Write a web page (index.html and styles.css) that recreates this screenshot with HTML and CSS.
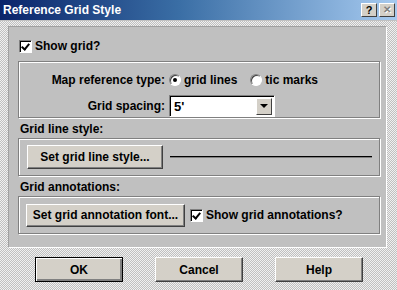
FILE: index.html
```html
<!DOCTYPE html>
<html lang="en">
<head>
  <meta charset="UTF-8" />
  <title>Reference Grid Style</title>
  <link rel="stylesheet" href="styles.css">
</head>
<body>
  <div class="window">
    <div class="titlebar">
      <span class="title">Reference Grid Style</span>
      <div class="caption-buttons">
        <span class="cap-btn">?</span>
        <span class="cap-btn disabled">&#x2715;</span>
      </div>
    </div>

    <div class="frame">
      <div class="panel">
        <label class="check show-grid">
          <span class="box checked"></span>
          <span>Show grid?</span>
        </label>

        <div class="group ref-group">
          <div class="field-row">
            <span class="field-label">Map reference type:</span>
            <label class="radio"><span class="dot on"></span>grid lines</label>
            <label class="radio"><span class="dot"></span>tic marks</label>
          </div>
          <div class="field-row">
            <span class="field-label">Grid spacing:</span>
            <div class="select">
              <span class="select-value">5'</span>
              <span class="select-arrow"></span>
            </div>
          </div>
        </div>

        <div class="section-label">Grid line style:</div>
        <div class="group row-group">
          <button class="btn line-btn">Set grid line style...</button>
          <div class="line-sample"></div>
        </div>

        <div class="section-label">Grid annotations:</div>
        <div class="group row-group annot-group">
          <button class="btn font-btn">Set grid annotation font...</button>
          <label class="check">
            <span class="box checked"></span>
            <span>Show grid annotations?</span>
          </label>
        </div>
      </div>

      <div class="actions">
        <button class="btn action default">OK</button>
        <button class="btn action">Cancel</button>
        <button class="btn action">Help</button>
      </div>
    </div>
  </div>
</body>
</html>
```

FILE: styles.css
```css
* {
  box-sizing: border-box;
}
body {
  margin: 0;
  background: #c0c0c0;
  font-family: 'Liberation Sans', Arial, sans-serif;
  font-size: 12px;
  font-weight: 700;
  color: #000;
}
.window {
  width: 397px;
  height: 290px;
  display: flex;
  flex-direction: column;
  background: repeating-conic-gradient(#c0c0c0 0 25%, #f0f0f0 0 50%) 0 0 / 2px 2px;
}
.titlebar {
  height: 21px;
  display: flex;
  align-items: center;
  justify-content: space-between;
  padding: 0 2px 0 3px;
  background: linear-gradient(to right, #0a246a, #3a6ea5 45%, #a6caf0);
  border-bottom: 1px solid #c0c0c0;
}
.title {
  color: #fff;
  font-size: 12px;
}
.caption-buttons {
  display: flex;
  gap: 2px;
}
.cap-btn {
  width: 16px;
  height: 14px;
  display: flex;
  align-items: center;
  justify-content: center;
  background: #d4d0c8;
  border: 1px solid;
  border-color: #fff #404040 #404040 #fff;
  font-size: 11px;
  line-height: 1;
}
.cap-btn.disabled {
  color: #808080;
  font-size: 10px;
  text-shadow: 1px 1px #fff;
}
.frame {
  flex: 1;
  padding: 5px 10px 0 8px;
  display: flex;
  flex-direction: column;
}
.panel {
  height: 222px;
  background: #c0c0c0;
  border: 1px solid;
  border-color: #a0a0a0 #fff #fff #a0a0a0;
  padding: 12px 6px 0 9px;
  display: flex;
  flex-direction: column;
}
.check {
  display: flex;
  align-items: center;
  gap: 3px;
}
.show-grid {
  margin-left: 1px;
  height: 14px;
}
.box {
  width: 13px;
  height: 13px;
  background: #fff;
  border: 1px solid;
  border-color: #808080 #fff #fff #808080;
  box-shadow: inset 1px 1px #000;
  position: relative;
}
.box.checked::after {
  content: "";
  position: absolute;
  left: 3px;
  top: 1px;
  width: 3px;
  height: 6px;
  border: solid #000;
  border-width: 0 2px 2px 0;
  transform: rotate(40deg);
}
.group {
  border: 1px solid #808080;
  box-shadow: inset 1px 1px #fff, 1px 1px #fff;
}
.ref-group {
  margin-top: 8px;
  height: 57px;
  padding: 9px 0 0;
  display: flex;
  flex-direction: column;
  gap: 6px;
}
.field-row {
  display: flex;
  align-items: center;
  height: 22px;
}
.field-label {
  width: 146px;
  text-align: right;
  margin-right: 4px;
}
.radio {
  display: flex;
  align-items: center;
  gap: 3px;
  margin-right: 13px;
}
.dot {
  width: 12px;
  height: 12px;
  border-radius: 50%;
  background: #fff;
  border: 1px solid;
  border-color: #808080 #fff #fff #808080;
  box-shadow: inset 1px 1px #404040;
  display: flex;
  align-items: center;
  justify-content: center;
}
.dot.on::after {
  content: "";
  width: 4px;
  height: 4px;
  border-radius: 50%;
  background: #000;
}
.select {
  width: 106px;
  height: 22px;
  background: #fff;
  border: 1px solid;
  border-color: #808080 #fff #fff #808080;
  box-shadow: inset 1px 1px #000;
  display: flex;
  align-items: center;
  justify-content: space-between;
  padding: 0 2px 0 4px;
}
.select-value {
  font-size: 13px;
}
.select-arrow {
  width: 16px;
  height: 17px;
  background: #d4d0c8;
  border: 1px solid;
  border-color: #fff #404040 #404040 #fff;
  display: flex;
  align-items: center;
  justify-content: center;
}
.select-arrow::after {
  content: "";
  border: 4px solid transparent;
  border-top: 4px solid #000;
  border-bottom: 0;
}
.section-label {
  margin: 1px 0 0 2px;
  height: 19px;
  display: flex;
  align-items: center;
}
.row-group {
  height: 38px;
  display: flex;
  align-items: center;
  padding: 0 7px 0 8px;
}
.btn {
  font: inherit;
  color: #000;
  background: #d4d0c8;
  border: 1px solid;
  border-color: #fff #404040 #404040 #fff;
  box-shadow: inset -1px -1px #808080;
  padding: 0;
}
.line-btn {
  width: 136px;
  height: 24px;
}
.line-sample {
  flex: 1;
  margin-left: 7px;
  height: 2px;
  background: #000;
  border-bottom: 1px solid #808080;
}
.annot-group {
  padding-left: 7px;
}
.font-btn {
  width: 159px;
  height: 23px;
  margin-right: 5px;
}
.actions {
  display: flex;
  padding: 9px 0 0 27px;
  gap: 32px;
}
.action {
  width: 88px;
  height: 25px;
}
.action.default {
  border: 1px solid #000;
  box-shadow: inset 1px 1px #fff, inset -2px -2px #808080;
}
```
